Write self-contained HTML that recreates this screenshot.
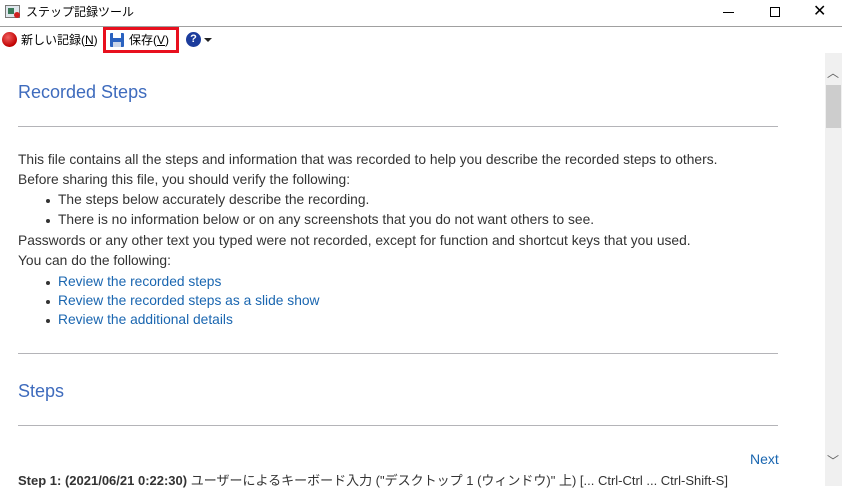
<!DOCTYPE html>
<html><head><meta charset="utf-8"><style>
*{margin:0;padding:0;box-sizing:border-box}
body{width:842px;height:486px;overflow:hidden;background:#fff;font-family:"Liberation Sans","Noto Sans CJK JP",sans-serif;color:#333;position:relative}
.a{position:absolute;white-space:nowrap}
.t{font-size:13.8px;line-height:20px}
.h{font-size:18px;color:#3e6bbd;left:18px}
.hr{position:absolute;left:18px;width:760px;height:1px;background:#b4b4b8}
.lk{color:#1a66b0}
.b{position:absolute;width:4px;height:4px;border-radius:2px;background:#333}
</style></head><body>
<div class="a" style="left:5px;top:5px;width:15px;height:13px;border:1px solid #777;background:#dfe6ec"></div>
<div class="a" style="left:8px;top:8px;width:6px;height:6px;background:#3a7a5a"></div>
<div class="a" style="left:14px;top:12px;width:6px;height:6px;border-radius:3px;background:#d02020"></div>
<div class="a t" style="left:26px;top:2px;font-size:12px;color:#000">ステップ記録ツール</div>
<div class="a" style="left:723px;top:12px;width:11px;height:1px;background:#000"></div>
<div class="a" style="left:770px;top:7px;width:10px;height:10px;border:1px solid #000"></div>
<div class="a" style="left:813px;top:1px;font-size:16px;color:#000">✕</div>
<div class="a" style="left:0;top:26px;width:842px;height:1px;background:#a0a0a0"></div>
<div class="a" style="left:2px;top:32px;width:15px;height:15px;border-radius:8px;background:radial-gradient(circle at 40% 35%,#f06060,#c00000 70%,#800000)"></div>
<div class="a" style="left:21px;top:31px;font-size:12px;color:#000">新しい記録(<u>N</u>)</div>
<div class="a" style="left:103px;top:27px;width:76px;height:26px;border:3px solid #e8101e"></div>
<div class="a" style="left:110px;top:33px;width:14px;height:14px;background:#2a62c0;border-radius:1px"></div>
<div class="a" style="left:113px;top:33px;width:8px;height:5px;background:#fff"></div>
<div class="a" style="left:113px;top:42px;width:8px;height:5px;background:#c8d4e8"></div>
<div class="a" style="left:129px;top:31px;font-size:12px;color:#000">保存(<u>V</u>)</div>
<div class="a" style="left:186px;top:32px;width:15px;height:15px;border-radius:8px;background:#1c3c9c;color:#fff;font-size:11px;font-weight:bold;text-align:center;line-height:15px">?</div>
<div class="a" style="left:204px;top:38px;width:0;height:0;border-left:4px solid transparent;border-right:4px solid transparent;border-top:4px solid #222"></div>
<div class="a" style="left:825px;top:53px;width:17px;height:433px;background:#f0f0f0"></div>
<div class="a" style="left:826px;top:85px;width:15px;height:43px;background:#cdcdcd"></div>
<div class="a" style="left:827px;top:64px;font-size:12px;color:#606060">︿</div>
<div class="a" style="left:827px;top:452px;font-size:12px;color:#606060">﹀</div>
<div class="a h" style="top:82px">Recorded Steps</div>
<div class="hr" style="top:126px"></div>
<div class="a t" style="left:18px;top:150px">This file contains all the steps and information that was recorded to help you describe the recorded steps to others.</div>
<div class="a t" style="left:18px;top:170px">Before sharing this file, you should verify the following:</div>
<div class="b" style="left:46px;top:199px"></div>
<div class="a t" style="left:58px;top:190px">The steps below accurately describe the recording.</div>
<div class="b" style="left:46px;top:219px"></div>
<div class="a t" style="left:58px;top:210px">There is no information below or on any screenshots that you do not want others to see.</div>
<div class="a t" style="left:18px;top:231px">Passwords or any other text you typed were not recorded, except for function and shortcut keys that you used.</div>
<div class="a t" style="left:18px;top:251px">You can do the following:</div>
<div class="b" style="left:46px;top:281px"></div>
<div class="a t lk" style="left:58px;top:272px">Review the recorded steps</div>
<div class="b" style="left:46px;top:300px"></div>
<div class="a t lk" style="left:58px;top:291px">Review the recorded steps as a slide show</div>
<div class="b" style="left:46px;top:319px"></div>
<div class="a t lk" style="left:58px;top:310px">Review the additional details</div>
<div class="hr" style="top:353px"></div>
<div class="a h" style="top:381px">Steps</div>
<div class="hr" style="top:425px"></div>
<div class="a t lk" style="left:750px;top:449px;font-size:14px">Next</div>
<div class="a t" style="left:18px;top:471px;font-size:13px"><b>Step 1: (2021/06/21 0:22:30)</b> ユーザーによるキーボード入力 ("デスクトップ 1 (ウィンドウ)" 上) [... Ctrl-Ctrl ... Ctrl-Shift-S]</div>
</body></html>
